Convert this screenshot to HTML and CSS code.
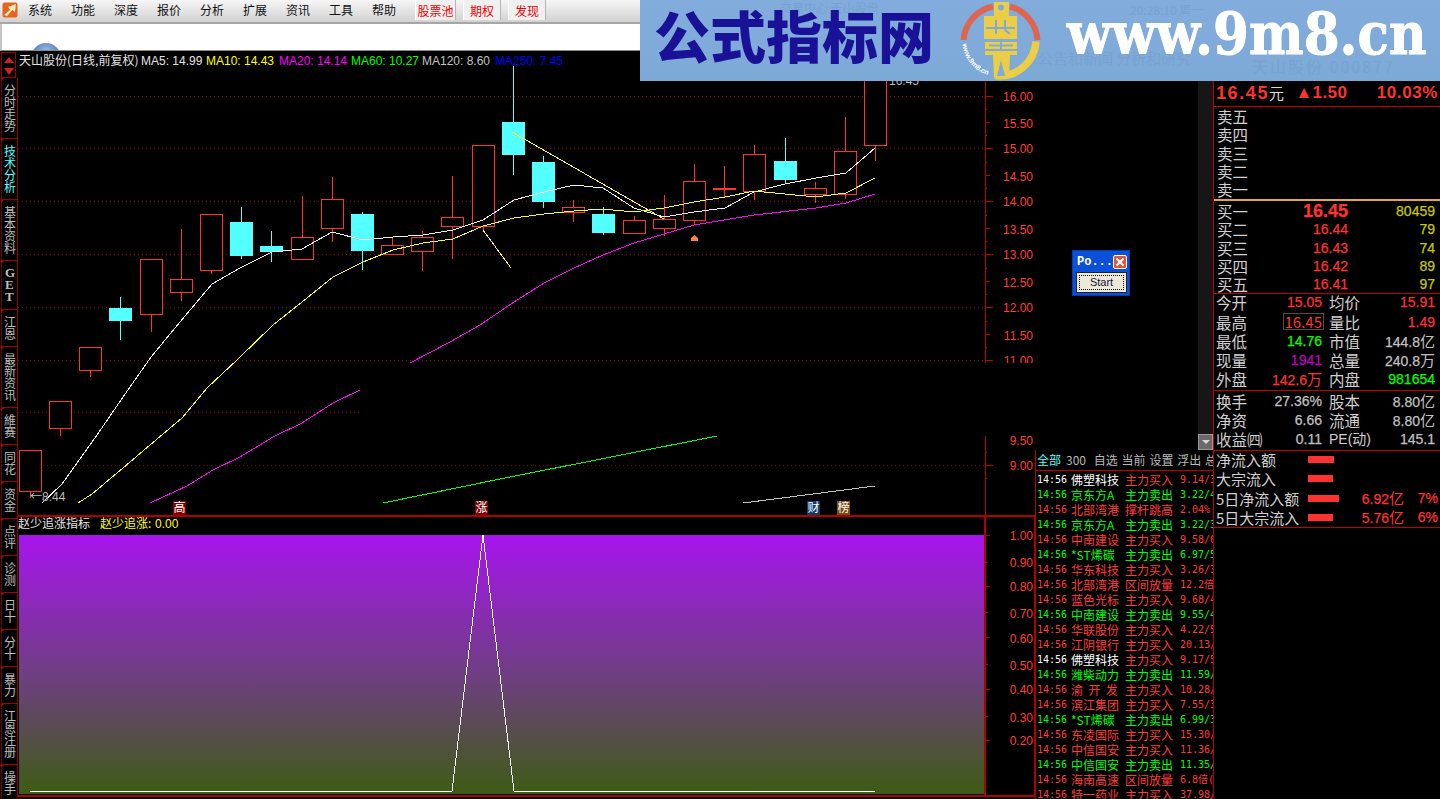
FILE: index.html
```html
<!DOCTYPE html>
<html lang="zh">
<head>
<meta charset="utf-8">
<title>天山股份</title>
<link rel="stylesheet" href="styles.css">
</head>
<body>
<header class="menubar">
  <svg class="app-logo" viewBox="0 0 16 16" width="16" height="16"><rect x="0.5" y="0.5" width="15" height="15" rx="2" fill="#e8641c"/><path d="M2 13 L8 8 L6 5 L14 2 L13 10 L10.500 8 L5 14 Z" fill="#ffe9c0"/></svg>
  <nav class="menu">
    <span>系统</span><span>功能</span><span>深度</span><span>报价</span><span>分析</span><span>扩展</span><span>资讯</span><span>工具</span><span>帮助</span>
  </nav>
  <div class="menu-hot">
    <span class="hot hot-3">股票池</span><span class="hot">期权</span><span class="hot">发现</span>
  </div>
</header>
<div class="toolbar"><div class="globe"></div></div>

<main class="workspace">
  <aside class="tabs">
    <div class="scroller"><i class="tri-up"></i><i class="tri-down"></i></div>
    <div class="tab">分时走势</div>
    <div class="tab active">技术分析</div>
    <div class="tab">基本资料</div>
    <div class="tab tab-latin">GET</div>
    <div class="tab">江恩</div>
    <div class="tab">最新资讯</div>
    <div class="tab">維赛</div>
    <div class="tab">同花</div>
    <div class="tab">资金</div>
    <div class="tab">点评</div>
    <div class="tab">诊测</div>
    <div class="tab">日十</div>
    <div class="tab">分十</div>
    <div class="tab">暴力</div>
    <div class="tab">江恩注册</div>
    <div class="tab">操手</div>
    <div class="tab">股东</div>
  </aside>

  <section class="charts">
    <svg class="pane-main" viewBox="18 51 1017 464" width="1017" height="464">
      <g class="grid">
        <path d="M18 96.500H985M18 148.500H985M18 201.500H985M18 254.500H985M18 307.500H985M18 360.500H985M18 412.500H985M43 465.500H985"/>
      </g>
      <g class="candle-up">
        <rect x="19.500" y="450.500" width="22" height="41"/><path d="M30.500 492V498"/>
        <rect x="49.500" y="401.500" width="22" height="27"/><path d="M60.500 429V436"/>
        <rect x="79.500" y="347.500" width="22" height="23"/><path d="M90.500 371V377"/>
        <rect x="140.500" y="259.500" width="22" height="55"/><path d="M151.500 315V332"/>
        <rect x="170.500" y="279.500" width="22" height="13"/><path d="M181.500 229V279M181.500 293V301"/>
        <rect x="200.500" y="214.500" width="22" height="56"/><path d="M211.500 271V274"/>
        <rect x="291.500" y="237.500" width="22" height="22"/><path d="M302.500 196V237"/>
        <rect x="321.500" y="199.500" width="22" height="29"/><path d="M332.500 177V199M332.500 229V242"/>
        <rect x="381.500" y="245.500" width="22" height="9"/><path d="M392.500 237V245"/>
        <rect x="411.500" y="237.500" width="22" height="14"/><path d="M422.500 231V237M422.500 252V271"/>
        <rect x="441.500" y="217.500" width="22" height="9"/><path d="M452.500 176V217M452.500 227V259"/>
        <rect x="472.500" y="145.500" width="22" height="81"/><path d="M483.500 227V231"/>
        <rect x="562.500" y="207.500" width="22" height="5"/><path d="M573.500 200V207M573.500 213V222"/>
        <rect x="623.500" y="220.500" width="22" height="13"/><path d="M634.500 216V220"/>
        <rect x="653.500" y="219.500" width="22" height="9"/><path d="M664.500 195V219M664.500 229V236"/>
        <rect x="683.500" y="181.500" width="22" height="39"/><path d="M694.500 164V181M694.500 221V224"/>
        <path d="M724.500 166V197M713 188.500H736M713 189.500H736"/>
        <rect x="743.500" y="154.500" width="22" height="37"/><path d="M754.500 145V154M754.500 192V200"/>
        <rect x="804.500" y="188.500" width="22" height="6"/><path d="M815.500 182V188M815.500 195V203"/>
        <rect x="834.500" y="151.500" width="22" height="43"/><path d="M845.500 117V151M845.500 195V199"/>
        <rect x="864.500" y="60.500" width="22" height="85"/><path d="M875.500 146V161"/>
      </g>
      <g class="candle-down">
        <rect x="109" y="308" width="23" height="13"/><path d="M120.500 297V340"/>
        <rect x="230" y="222" width="23" height="34"/><path d="M241.500 207V259"/>
        <rect x="260" y="246" width="23" height="6"/><path d="M271.500 231V262"/>
        <rect x="351" y="214" width="23" height="37"/><path d="M362.500 212V270"/>
        <rect x="502" y="122" width="23" height="33"/><path d="M513.500 60V175"/>
        <rect x="532" y="162" width="23" height="40"/><path d="M543.500 156V208"/>
        <rect x="592" y="214" width="23" height="19"/><path d="M603.500 207V235"/>
        <rect x="774" y="161" width="23" height="19"/><path d="M785.500 138V184"/>
      </g>
      <polyline class="ma5" points="42,503 62,484 97,435 123,397 151,357 180,322 212,284 240,268 272,252 302,249 332,232 363,240 393,237 423,235 453,230 483,220 514,200 544,192 574,185 603,188 634,208 664,217 694,212 725,208 754,192 785,184 816,178 846,173 875,148"/>
      <polyline class="ma10" points="78,503 92,494 123,468 150,445 182,418 207,388 237,360 273,325 302,302 333,277 363,262 393,250 423,243 453,239 483,226 514,218 544,214 574,211 603,209 634,212 664,208 694,202 725,197 754,191 785,194 816,197 846,193 875,178"/>
      <polyline class="ma20" points="150,503 187,486 213,470 240,457 273,437 302,423 333,403 360,390 410,363 450,342 480,325 514,302 544,283 574,268 603,255 634,243 694,225 754,215 816,208 846,203 875,194"/>
      <polyline class="ma60" points="383,503 500,479 717,436 800,420"/>
      <polyline class="ma120" points="743,503 875,486"/>
      <polyline class="trend" points="512,132 664,219"/>
      <polyline class="trend" points="483,230 511,268"/>
      <path class="marker" d="M691 241V238L694.500 235L698 238V241Z"/>
      <rect class="mask" x="360" y="363" width="675" height="73"/>
      <rect class="mask" x="18" y="51" width="967" height="15"/>

      <path class="axis" d="M985.500 60V363M985.500 436V515M985 96.500H993M985 148.500H993M985 201.500H993M985 254.500H993M985 307.500H993M985 360.500H993M985 465.500H993M985 122.500H990M985 175.500H990M985 228.500H990M985 281.500H990M985 334.500H990M985 109.500H987M985 135.500H987M985 162.500H987M985 188.500H987M985 215.500H987M985 241.500H987M985 268.500H987M985 294.500H987M985 321.500H987M985 347.500H987M985 452.500H987M985 478.500H987"/>
      <g class="axis-labels">
        <text x="1033" y="101">16.00</text><text x="1033" y="128">15.50</text><text x="1033" y="153">15.00</text><text x="1033" y="181">14.50</text><text x="1033" y="206">14.00</text><text x="1033" y="234">13.50</text><text x="1033" y="259">13.00</text><text x="1033" y="287">12.50</text><text x="1033" y="312">12.00</text><text x="1033" y="340">11.50</text><text x="1033" y="365">11.00</text><text x="1033" y="445">9.50</text><text x="1033" y="470">9.00</text>
      </g>
      <rect class="mask" x="990" y="363" width="45" height="10"/>
      <g class="title">
        <text class="t-white cjk" x="19" y="65">天山股份(日线,前复权)</text>
        <text class="t-white" x="141" y="65">MA5: 14.99</text>
        <text class="t-yellow" x="206" y="65">MA10: 14.43</text>
        <text class="t-magenta" x="279" y="65">MA20: 14.14</text>
        <text class="t-green" x="351" y="65">MA60: 10.27</text>
        <text class="t-gray" x="422" y="65">MA120: 8.60</text>
        <text class="t-blue" x="495" y="65">MA250: 7.45</text>
      </g>
      <text class="hi-lo" x="889" y="85">16.45</text>
      <text class="hi-lo" x="30" y="501"><tspan class="cjk">←</tspan>8.44</text>
      <rect class="badge-red" x="173" y="501" width="13" height="14"/><text class="badge-t cjk" x="173.500" y="512">高</text>
      <rect class="badge-red" x="475" y="501" width="13" height="14"/><text class="badge-t cjk" x="475.500" y="512">涨</text>
      <rect class="badge-blue" x="807" y="501" width="13" height="14"/><text class="badge-t cjk" x="807.500" y="512">财</text>
      <rect class="badge-brown" x="837" y="501" width="13" height="14"/><text class="badge-t cjk" x="837.500" y="512">榜</text>
    </svg>

    <svg class="pane-sub" viewBox="18 515 1017 284" width="1017" height="284">
      <defs>
        <linearGradient id="fade" x1="0" y1="0" x2="0" y2="1">
          <stop offset="0" stop-color="#a714ee"/>
          <stop offset="0.55" stop-color="#6e3f80"/>
          <stop offset="1" stop-color="#3d5c14"/>
        </linearGradient>
      </defs>
      <rect x="19" y="535" width="965" height="259" fill="url(#fade)"/>
      <polyline class="spike" points="30,791 452,791 483,535 514,791 875,791"/>
      <path class="frame" d="M18 515.500H1035M984.500 515V797M18 795.500H1035M1034.500 515V797"/>
      <path class="frame-thin" d="M985 535.500H990M985 562.500H988M985 586.500H990M985 612.500H988M985 637.500H990M985 664.500H988M985 689.500H990M985 716.500H988M985 740.500H990"/>
      <g class="axis-labels">
        <text x="1033" y="540">1.00</text><text x="1033" y="567">0.90</text><text x="1033" y="591">0.80</text><text x="1033" y="618">0.70</text><text x="1033" y="643">0.60</text><text x="1033" y="670">0.50</text><text x="1033" y="694">0.40</text><text x="1033" y="722">0.30</text><text x="1033" y="745">0.20</text>
      </g>
      <text class="t-white cjk" x="18" y="528">赵少追涨指标</text>
      <text class="t-yellow cjk" x="100" y="528">赵少追涨:</text>
      <text class="t-yellow" x="155" y="528">0.00</text>
    </svg>
  </section>

  <section class="side">
    <div class="side-left">
      <div class="side-blank"><div class="scrollbar"><button class="scroll-down" aria-label="down"></button></div></div>
      <div class="news">
        <div class="news-tabs"><span class="on">全部</span><span>300</span><span>自选</span><span>当前</span><span>设置</span><span>浮出</span><span>总</span></div>
        <div class="n-row white"><b>14:56</b><em>佛塑科技</em><u>主力买入</u><s>9.14/3</s></div>
        <div class="n-row green"><b>14:56</b><em>京东方A</em><u>主力卖出</u><s>3.22/4</s></div>
        <div class="n-row"><b>14:56</b><em>北部湾港</em><u>撑杆跳高</u><s>2.04%</s></div>
        <div class="n-row green"><b>14:56</b><em>京东方A</em><u>主力卖出</u><s>3.22/3</s></div>
        <div class="n-row"><b>14:56</b><em>中南建设</em><u>主力买入</u><s>9.58/6</s></div>
        <div class="n-row green"><b>14:56</b><em>*ST烯碳</em><u>主力卖出</u><s>6.97/5</s></div>
        <div class="n-row"><b>14:56</b><em>华东科技</em><u>主力买入</u><s>3.26/3</s></div>
        <div class="n-row"><b>14:56</b><em>北部湾港</em><u>区间放量</u><s>12.2倍</s></div>
        <div class="n-row"><b>14:56</b><em>蓝色光标</em><u>主力买入</u><s>9.68/4</s></div>
        <div class="n-row green"><b>14:56</b><em>中南建设</em><u>主力卖出</u><s>9.55/4</s></div>
        <div class="n-row"><b>14:56</b><em>华联股份</em><u>主力买入</u><s>4.22/5</s></div>
        <div class="n-row"><b>14:56</b><em>江阴银行</em><u>主力买入</u><s>20.13/</s></div>
        <div class="n-row white"><b>14:56</b><em>佛塑科技</em><u>主力买入</u><s>9.17/5</s></div>
        <div class="n-row green"><b>14:56</b><em>潍柴动力</em><u>主力卖出</u><s>11.59/</s></div>
        <div class="n-row"><b>14:56</b><em>渝&nbsp;&nbsp;开&nbsp;&nbsp;发</em><u>主力买入</u><s>10.28/</s></div>
        <div class="n-row"><b>14:56</b><em>滨江集团</em><u>主力买入</u><s>7.55/3</s></div>
        <div class="n-row green"><b>14:56</b><em>*ST烯碳</em><u>主力卖出</u><s>6.99/3</s></div>
        <div class="n-row"><b>14:56</b><em>东凌国际</em><u>主力买入</u><s>15.30/</s></div>
        <div class="n-row"><b>14:56</b><em>中信国安</em><u>主力买入</u><s>11.36/</s></div>
        <div class="n-row green"><b>14:56</b><em>中信国安</em><u>主力卖出</u><s>11.35/</s></div>
        <div class="n-row"><b>14:56</b><em>海南高速</em><u>区间放量</u><s>6.8倍(</s></div>
        <div class="n-row"><b>14:56</b><em>特一药业</em><u>主力买入</u><s>37.98/</s></div>
      </div>
    </div>

    <div class="quote">
      <div class="q-head"><span class="q-price">16.45<i>元</i></span><span class="q-change">▲1.50</span><span class="q-pct">10.03%</span></div>
      <div class="q-sell">
        <div class="q-level"><span>卖五</span></div>
        <div class="q-level"><span>卖四</span></div>
        <div class="q-level"><span>卖三</span></div>
        <div class="q-level"><span>卖二</span></div>
        <div class="q-level"><span>卖一</span></div>
      </div>
      <div class="q-buy">
        <div class="q-level"><span>买一</span><b class="big">16.45</b><em>80459</em></div>
        <div class="q-level"><span>买二</span><b>16.44</b><em>79</em></div>
        <div class="q-level"><span>买三</span><b>16.43</b><em>74</em></div>
        <div class="q-level"><span>买四</span><b>16.42</b><em>89</em></div>
        <div class="q-level"><span>买五</span><b>16.41</b><em>97</em></div>
      </div>
      <div class="q-stats">
        <div class="q-stat"><span>今开</span><b class="up">15.05</b><span class="l2">均价</span><b class="up">15.91</b></div>
        <div class="q-stat"><span>最高</span><b class="up"><i class="boxed">16.45</i></b><span class="l2">量比</span><b class="up">1.49</b></div>
        <div class="q-stat"><span>最低</span><b class="down">14.76</b><span class="l2">市值</span><b>144.8<i>亿</i></b></div>
        <div class="q-stat"><span>现量</span><b class="vol">1941</b><span class="l2">总量</span><b>240.8<i>万</i></b></div>
        <div class="q-stat"><span>外盘</span><b class="up">142.6<i>万</i></b><span class="l2">内盘</span><b class="down">981654</b></div>
      </div>
      <div class="q-info">
        <div class="q-stat"><span>换手</span><b>27.36%</b><span class="l2">股本</span><b>8.80<i>亿</i></b></div>
        <div class="q-stat"><span>净资</span><b>6.66</b><span class="l2">流通</span><b>8.80<i>亿</i></b></div>
        <div class="q-stat"><span class="wide">收益㈣</span><b>0.11</b><span class="l2 latin">PE(<i>动</i>)</span><b>145.1</b></div>
      </div>
      <div class="q-flow">
        <div class="f-row"><span>净流入额</span><i class="bar bar-26"></i><b></b><b></b></div>
        <div class="f-row"><span>大宗流入</span><i class="bar bar-25"></i><b></b><b></b></div>
        <div class="f-row"><span>5日净流入额</span><i class="bar bar-31"></i><b>6.92<i>亿</i></b><b>7%</b></div>
        <div class="f-row"><span>5日大宗流入</span><i class="bar bar-25"></i><b>5.76<i>亿</i></b><b>6%</b></div>
      </div>
    </div>
  </section>
</main>

<div class="popup">
  <div class="popup-title"><span>Po...</span><button class="popup-close" aria-label="close"><svg viewBox="0 0 10 10" width="10" height="10"><path d="M1.500 1.500L8.500 8.500M8.500 1.500L1.500 8.500"/></svg></button></div>
  <button class="popup-btn"><span>Start</span></button>
</div>

<aside class="banner">
  <div class="banner-ghost ghost-top">交易中心 天山股份</div>
  <div class="banner-ghost ghost-time">20:28:10 周一</div>
  <div class="banner-ghost ghost-a">公告和新闻 分析和研究</div>
  <div class="banner-ghost ghost-b">天山股份 000877</div>
  <div class="banner-name">公式指标网</div>
  <svg class="banner-logo" viewBox="0 0 90 82" width="90" height="82">
    <defs><path id="arc" d="M7.500 44 A36 36 0 0 0 37 76"/></defs>
    <g fill="none" stroke-width="6">
      <path stroke="#dd6650" d="M8.500 40 A37 37 0 0 1 38 6.500"/>
      <path stroke="#dd6650" d="M55 6.500 A37 37 0 0 1 82.500 40"/>
    </g>
    <path fill="none" stroke="#ecce46" stroke-width="7.500" d="M81 41.500 A36.500 36.500 0 0 1 40 75.500"/>
    <text class="logo-url"><textPath href="#arc">www.9m8.cn</textPath></text>
    <g fill="#ecce46">
      <path d="M39 2H54V16H62V39H29V16H39Z"/>
      <path d="M30 42H62V55H55L54 78H39L38 55H30Z"/>
    </g>
    <circle cx="46" cy="7.500" r="3" fill="#80abd9"/>
    <g stroke="#80abd9" stroke-width="2" fill="none">
      <path d="M31 28H60M41 20V34M50 20V30L55 34"/>
      <path d="M30 50H62M46 42V50M34 45.500H58"/>
    </g>
    <path d="M46 60L42 76H50Z" fill="#80abd9"/>
  </svg>
  <div class="banner-url">www.9m8.cn</div>
</aside>
</body>
</html>
```

FILE: styles.css
```css
* { box-sizing: border-box; }
html, body { margin: 0; padding: 0; width: 1440px; height: 799px; overflow: hidden; background: #000; }
body {
  position: relative;
  font-family: "Liberation Sans", "Noto Sans CJK SC", sans-serif;
  font-size: 12px;
  color: #c0c0c0;
}
i, em, u, s, b { font-style: normal; text-decoration: none; font-weight: normal; }

/* top chrome */
.menubar {
  height: 24px;
  display: flex;
  align-items: center;
  padding: 0 0 2px 2px;
  background: linear-gradient(#f6f6f6, #d2d2d2);
  border-bottom: 2px solid #a6a6a6;
  font-family: "Noto Sans CJK SC", sans-serif;
  color: #111;
}
.app-logo { flex: none; margin-right: 10px; }
.menu { display: flex; gap: 19px; line-height: 20px; }
.menu span { width: 24px; }
.menu-hot { display: flex; gap: 7px; margin-left: 19px; align-self: stretch; }
.hot {
  width: 38px;
  text-align: center;
  color: #f00000;
  line-height: 22px;
  border-left: 1px solid #fff;
  border-right: 1px solid #b4b4b4;
  background: #f0f0f0;
}
.hot-3 { width: 41px; }
.toolbar {
  height: 27px;
  background: #fff;
  border-left: 2px solid #c4c4c4;
  border-bottom: 1px solid #8a8a8a;
  overflow: hidden;
  padding: 19px 0 0 29px;
}
.globe {
  width: 30px;
  height: 30px;
  border-radius: 50%;
  background: radial-gradient(circle at 50% 30%, #9cc0ea, #3c64a4 70%);
}

/* workspace */
.workspace { display: flex; height: 748px; background: #000; overflow: hidden; }

.tabs { flex: none; width: 18px; padding: 1px 0 0 1px; overflow: hidden; }
.scroller {
  width: 15px;
  height: 26px;
  border: 1px solid #a00000;
  display: flex;
  flex-direction: column;
  align-items: center;
  gap: 5px;
  padding-top: 4px;
}
.tri-up, .tri-down { width: 0; height: 0; border-left: 5px solid transparent; border-right: 5px solid transparent; }
.tri-up { border-bottom: 6px solid #d02020; }
.tri-down { border-top: 7px solid #d02020; }
.tab {
  position: relative;
  width: 17px;
  padding: 6px 0 6px 2px;
  line-height: 12px;
  font-family: "Noto Sans CJK SC", sans-serif;
  font-size: 12px;
  word-break: break-all;
  color: #bdbdbd;
  border-left: 1px solid #7a0000;
  border-right: 1px solid #a00000;
  border-bottom: 1px solid #a00000;
}
.tab::before {
  content: "";
  position: absolute;
  left: -1px;
  top: 0;
  border-top: 3px solid #c00000;
  border-right: 3px solid transparent;
}
.tab.active { color: #55ffff; }
.tab-latin { font-family: "Liberation Serif", serif; font-weight: 700; font-size: 13px; padding-left: 3px; }

.charts { flex: none; width: 1017px; height: 748px; display: flex; flex-direction: column; }
.pane-main, .pane-sub { display: block; flex: none; }
svg text { font-family: "Liberation Sans", "Noto Sans CJK SC", sans-serif; font-size: 12px; }
svg text.cjk, svg tspan.cjk { font-family: "Noto Sans CJK SC", sans-serif; }
.grid path { fill: none; stroke: #8c0000; stroke-dasharray: 1 3; shape-rendering: crispEdges; }
.candle-up rect { fill: #000; stroke: #ff3232; shape-rendering: crispEdges; }
.candle-up path { fill: none; stroke: #ff3232; shape-rendering: crispEdges; }
.candle-down rect { fill: #54ffff; shape-rendering: crispEdges; }
.candle-down path { fill: none; stroke: #54ffff; shape-rendering: crispEdges; }
polyline { fill: none; stroke-width: 1; shape-rendering: crispEdges; }
.ma5 { stroke: #f0f0f0; }
.ma10 { stroke: #ffff00; }
.ma20 { stroke: #ff00ff; }
.ma60 { stroke: #00ff00; }
.ma120 { stroke: #c0c0c0; }
.trend { stroke: #ffff40; }
.spike { stroke: #ffffff; }
.marker { fill: #ff7f50; }
.mask { fill: #000; }
.axis { fill: none; stroke: #c00000; shape-rendering: crispEdges; }
.frame { fill: none; stroke: #b00000; stroke-width: 2; shape-rendering: crispEdges; }
.frame-thin { fill: none; stroke: #b00000; shape-rendering: crispEdges; }
.axis-labels text { fill: #ff3c3c; text-anchor: end; }
.t-white { fill: #e4e4e4; }
.t-yellow { fill: #ffff00; }
.t-magenta { fill: #ff00ff; }
.t-green { fill: #00ff00; }
.t-gray { fill: #c0c0c0; }
.t-blue { fill: #0000ff; }
.hi-lo { fill: #bdbdbd; }
.badge-red { fill: #800000; }
.badge-blue { fill: #0f3c6e; }
.badge-brown { fill: #7a4a10; }
.badge-t { fill: #fff; }

/* right side */
.side { flex: none; width: 405px; display: flex; height: 748px; }
.side-left { flex: none; width: 178px; display: flex; flex-direction: column; }
.side-blank { height: 399px; display: flex; justify-content: flex-end; padding-top: 29px; }
.scrollbar {
  width: 15px;
  background: #161616;
  display: flex;
  flex-direction: column;
  justify-content: flex-end;
}
.scroll-down {
  display: block;
  width: 15px;
  height: 16px;
  padding: 0;
  border: 1px solid #9a9a9a;
  background: #6a6a6a;
  position: relative;
}
.scroll-down::after {
  content: "";
  position: absolute;
  left: 3px;
  top: 5px;
  border-top: 4px solid #d8d8d8;
  border-left: 4px solid transparent;
  border-right: 4px solid transparent;
}
.news { flex: 1; overflow: hidden; border-left: 1px solid #b00000; font-family: "Noto Sans CJK SC", sans-serif; }
.news-tabs {
  display: flex;
  height: 21px;
  line-height: 19px;
  margin-bottom: 1px;
  padding-left: 1px;
  border-bottom: 1px solid #c00000;
  white-space: nowrap;
  overflow: hidden;
  color: #b8b8b8;
}
.news-tabs span { flex: none; width: 27.800px; }
.news-tabs .on { color: #55ffff; width: 29px; }
.n-row {
  display: grid;
  grid-template-columns: 34px 54px 55px 36px;
  height: 15px;
  line-height: 15px;
  padding-left: 1px;
  color: #ff3c3c;
  white-space: nowrap;
  overflow: hidden;
}
.n-row b { font-family: "DejaVu Sans Mono", monospace; font-size: 10px; }
.n-row s { font-family: "DejaVu Sans Mono", "Noto Sans CJK SC", monospace; font-size: 10px; overflow: hidden; }
.n-row.green b, .n-row.green em, .n-row.green u, .n-row.green s { color: #00ff00; }
.n-row.white b, .n-row.white em { color: #fff; }

.quote { flex: none; width: 227px; margin-top: 29px; border-left: 1px solid #c00000; font-size: 14px; }
.quote b, .quote em { -webkit-text-stroke: .25px currentColor; }
.q-head {
  height: 27px;
  display: flex;
  align-items: center;
  padding: 0 2px;
  color: #ff3232;
  font-weight: 700;
  border-bottom: 1px solid #c00000;
}
.q-price { font-size: 18px; font-weight: 700; letter-spacing: 1.600px; width: 80px; }
.q-price i { font-family: "Noto Sans CJK SC", sans-serif; font-size: 15px; font-weight: 400; letter-spacing: 0; color: #d8d8d8; }
.q-change { font-size: 17px; width: 82px; font-weight: 700; letter-spacing: .4px; }
.q-pct { font-size: 17px; font-weight: 700; letter-spacing: .6px; }
.q-sell { height: 94px; border-bottom: 2px solid #e8a830; }
.q-buy { height: 93px; border-bottom: 1px solid #c00000; padding-top: 1px; }
.q-level {
  display: grid;
  grid-template-columns: 32px 99px 1fr;
  align-items: center;
  height: 18.250px;
  line-height: 18px;
  padding: 0 5px 0 3px;
  color: #ff3232;
}
.q-level span { font-family: "Noto Sans CJK SC", sans-serif; font-size: 15.500px; color: #d0d0d0; }
.q-level b { text-align: right; }
.q-level b.big { font-size: 18px; font-weight: 700; }
.q-level em { text-align: right; color: #c8c800; }
.q-stats { height: 97px; border-bottom: 1px solid #c00000; }
.q-info { height: 60px; padding-top: 1px; border-bottom: 1px solid #c00000; }
.q-stat {
  display: grid;
  grid-template-columns: 32px 74px 39px 74px;
  height: 19px;
  line-height: 17px;
  padding: 0 0 2px 2px;
  align-items: center;
  color: #c0c0c0;
}
.q-stat span { font-family: "Noto Sans CJK SC", sans-serif; font-size: 15.500px; color: #d0d0d0; white-space: nowrap; }
.q-stat .l2 { padding-left: 7px; }
.q-stat .latin { font-family: "Liberation Sans", sans-serif; font-size: 14px; }
.q-stat .latin i { font-family: "Noto Sans CJK SC", sans-serif; }
.q-stat b { text-align: right; white-space: nowrap; }
.q-stat b i, .f-row b i { font-family: "Noto Sans CJK SC", sans-serif; font-size: 15px; -webkit-text-stroke: 0; }
.up { color: #ff3232; }
.down { color: #00ff00; }
.vol { color: #c000c0; }
.boxed { display: inline-block; border: 1px solid #505050; padding: 0 1px; line-height: 15px; margin-right: -2px; }
.q-flow { height: 77px; border-bottom: 1px solid #c00000; }
.f-row {
  display: grid;
  grid-template-columns: 92px 52px 44px 34px;
  align-items: center;
  height: 19px;
  line-height: 17px;
  padding: 0 0 2px 2px;
  color: #ff3232;
}
.f-row span { font-family: "Noto Sans CJK SC", sans-serif; font-size: 15px; color: #d0d0d0; white-space: nowrap; }
.f-row b { text-align: right; white-space: nowrap; }
.bar { display: block; height: 7px; background: #ff3232; }
.bar-25 { width: 25px; }
.bar-26 { width: 26px; }
.bar-31 { width: 31px; }

/* floating window */
.popup {
  position: absolute;
  left: 1072px;
  top: 250px;
  width: 58px;
  height: 46px;
  background: #0a50d8;
  border: 1px solid #0838b0;
  padding: 1px 3px 3px;
}
.popup-title { display: flex; justify-content: space-between; align-items: center; height: 20px; }
.popup-title span { font-family: "Liberation Mono", monospace; font-weight: 700; font-size: 12px; color: #fff; padding-left: 1px; }
.popup-close {
  width: 14px;
  height: 14px;
  padding: 1px;
  border: 1px solid #fff;
  border-radius: 2px;
  background: #e0583a;
  display: flex;
  align-items: center;
  justify-content: center;
  margin-right: 1px;
}
.popup-close path { fill: none; stroke: #fff; stroke-width: 2; }
.popup-btn {
  display: block;
  width: 51px;
  height: 21px;
  padding: 2px;
  border: 1px solid #222;
  background: #ece9d8;
  font-family: "Liberation Sans", sans-serif;
  font-size: 11px;
  color: #101040;
}
.popup-btn span { display: block; height: 15px; line-height: 13px; border: 1px dotted #000; }

/* ad banner over the window */
.banner {
  position: absolute;
  left: 640px;
  top: 0;
  width: 800px;
  height: 81px;
  background: linear-gradient(#82acdc, #7da9d7);
  overflow: hidden;
}
.banner-ghost { position: absolute; color: #78a3d1; font-family: "Noto Sans CJK SC", sans-serif; line-height: 16px; white-space: nowrap; }
.ghost-top { left: 140px; top: 0; font-size: 12px; }
.ghost-time { left: 490px; top: 2px; font-size: 12px; }
.ghost-a { left: 398px; top: 50px; font-size: 15px; }
.ghost-b { left: 612px; top: 58px; font-size: 16px; letter-spacing: 2px; }
.banner-name {
  position: absolute;
  left: 14px;
  top: -2px;
  font-family: "Noto Sans CJK SC", sans-serif;
  font-weight: 900;
  font-size: 56px;
  line-height: 72px;
  color: #1a1296;
  white-space: nowrap;
}
.banner-logo { position: absolute; left: 315px; top: 0; }
.logo-url { fill: #fff; font-family: "Liberation Sans", sans-serif; font-size: 7px; font-weight: 700; }
.banner-url {
  position: absolute;
  left: 427px;
  top: -1px;
  font-family: "DejaVu Serif", serif;
  font-weight: 700;
  font-size: 58px;
  line-height: 70px;
  color: #fff;
  -webkit-text-stroke: 1px #fff;
  white-space: nowrap;
  transform: scaleX(.89);
  transform-origin: left center;
}
```
